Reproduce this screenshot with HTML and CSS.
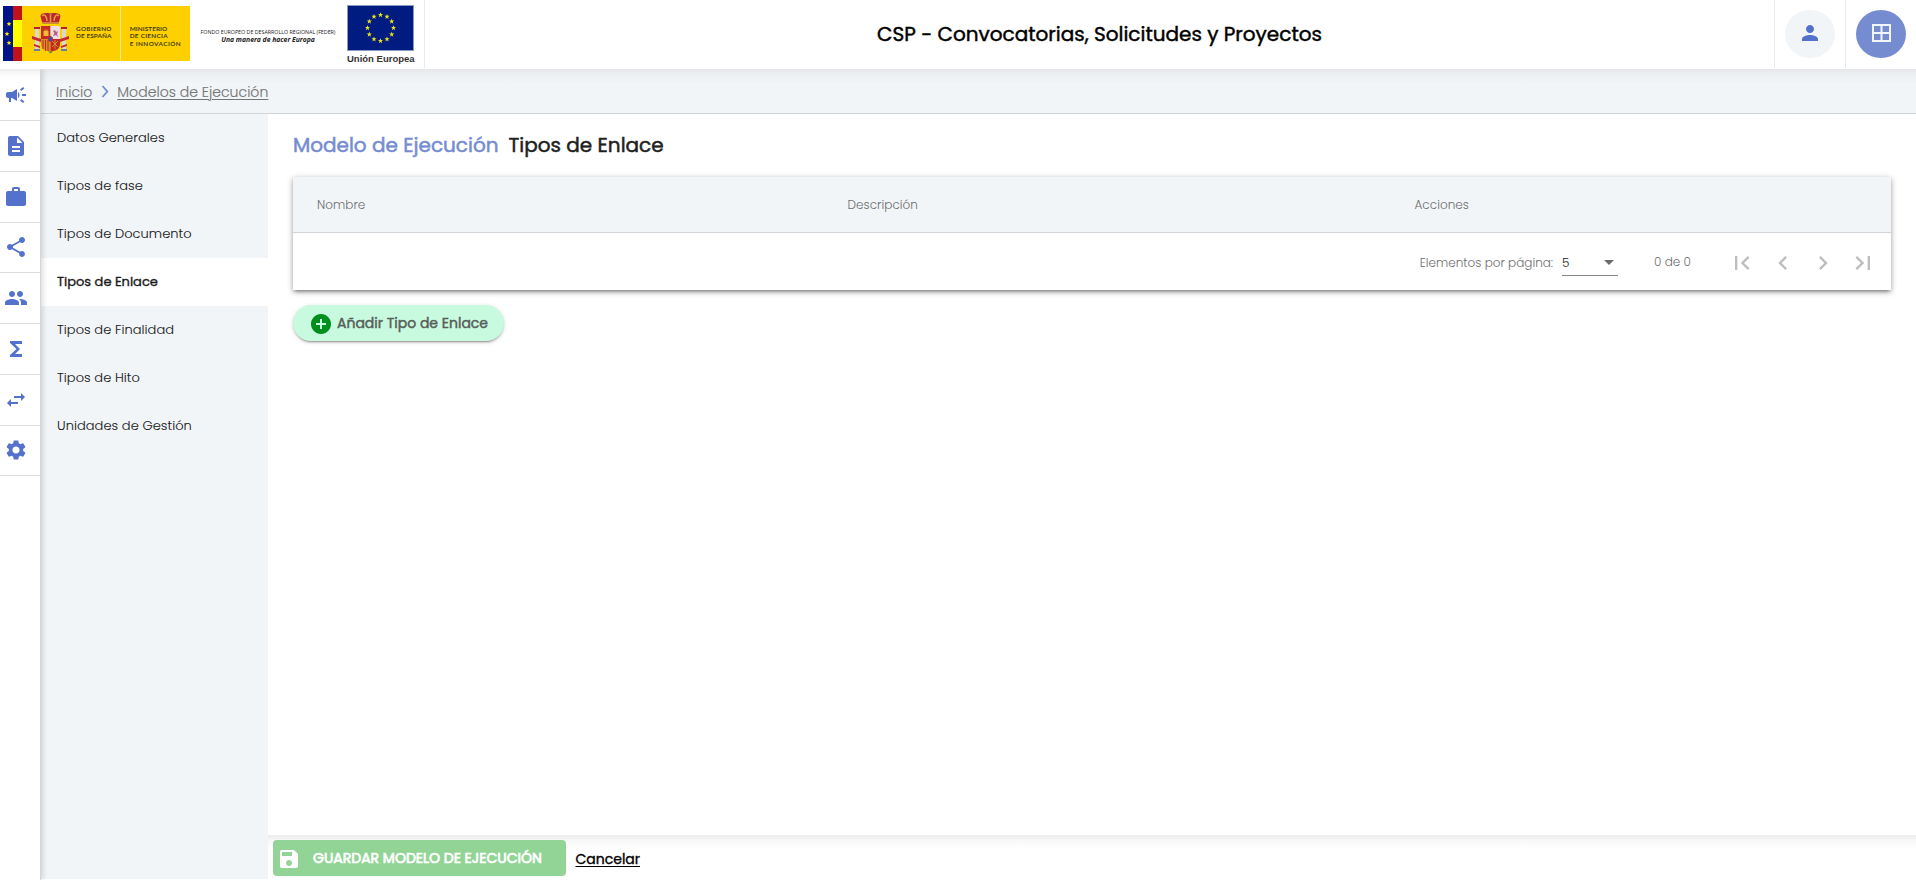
FILE: index.html
```
<!DOCTYPE html>
<html lang="es">
<head>
<meta charset="utf-8">
<title>CSP - Convocatorias, Solicitudes y Proyectos</title>
<link rel="stylesheet" href="styles.css">
</head>
<body>
<div class="app">
  <header class="topbar">
    <div class="logos">
      <svg class="logo-gob" width="187" height="55" viewBox="0 0 187 55">
        <rect width="187" height="55" fill="#ffd000"/>
        <rect width="10" height="55" fill="#001489"/>
        <rect x="10" width="9" height="55" fill="#c1121c"/>
        <rect x="10" y="14" width="9" height="27" fill="#ffff00"/>
        <g fill="#ffe600">
          <path id="st" d="M6 15.500l.7 1.500 1.600.2-1.200 1.100.3 1.600-1.400-.8-1.400.8.3-1.600L3.700 17.200l1.600-.2z"/>
          <use href="#st" x="-2" y="10"/>
          <use href="#st" y="19"/>
        </g>
        <g>
          <path d="M38 12c-2-5 3-5 9.500-5s11.500 0 9.500 5l-1.500 6h-16z" fill="#bf2530"/>
          <path d="M39 10c3-3 5 2 5 5M56 10c-3-3-5 2-5 5M47.500 7v9M39 17h17" fill="none" stroke="#d9a63a" stroke-width="1.500"/>
          <circle cx="47.500" cy="8" r="1.300" fill="#a98028"/>
          <rect x="32" y="23" width="4" height="21" fill="#d9d9cf"/>
          <rect x="59" y="23" width="4" height="21" fill="#d9d9cf"/>
          <path d="M31 21h6v2h-6zM58 21h6v2h-6z" fill="#b3222c"/>
          <path d="M31 43h6v2h-6zM58 43h6v2h-6z" fill="#68809b"/>
          <path d="M29 30l9 3v3l-9-3zM66 30l-9 3v3l9-3zM31 38l6 2v2l-6-2zM64 38l-6 2v2l6-2z" fill="#c62834"/>
          <path d="M38 20h9.500v13H38z" fill="#c52a2b"/>
          <path d="M47.500 20H57v13h-9.500z" fill="#eddce4"/>
          <path d="M38 33h9.500v12.500C42 45 38 43 38 38z" fill="#df8b24"/>
          <path d="M47.500 33H57v5c0 5-4 7-9.500 7.500z" fill="#bf2b24"/>
          <path d="M40.500 30v-5h1v-1.500h1V25h1v-1.500h1V25h1v5z" fill="#edbd35"/>
          <path d="M50 30l1.500-3-1.500-2 2-1 1 2 2-1-1 3 1 3-2-2z" fill="#b8587e"/>
          <path d="M40 34v9M42.500 34v11M45 34v11" stroke="#b6302a"/>
          <path d="M49 35l6 6m0-6l-6 6M52 34v9" stroke="#dda73a" stroke-width=".7"/>
          <ellipse cx="47.500" cy="33" rx="2.200" ry="2.600" fill="#34549c" stroke="#c62834" stroke-width=".8"/>
          <path d="M45 45.500h5l-2.500 2z" fill="#5f8c4a"/>
        </g>
        <rect x="117" width="1" height="55" fill="#ffe98a"/>
        <g class="gob-text">
          <text x="73" y="25.300" textLength="35.500">GOBIERNO</text>
          <text x="73" y="32.300" textLength="35.500">DE ESPAÑA</text>
          <text x="126.700" y="25.300" textLength="37.500">MINISTERIO</text>
          <text x="126.700" y="32.300" textLength="38">DE CIENCIA</text>
          <text x="126.700" y="39.500" textLength="51">E INNOVACIÓN</text>
        </g>
      </svg>
      <div class="feder">
        <span class="feder-fund">FONDO EUROPEO DE DESARROLLO REGIONAL (FEDER)</span>
        <span class="feder-motto">Una manera de hacer Europa</span>
      </div>
      <div class="eu">
        <svg width="67" height="46" viewBox="0 0 67 46">
          <rect x=".5" y=".5" width="66" height="45" fill="#001c80" stroke="#8c98c8"/>
          <g fill="#e8e21a">
            <path id="eu" d="M33.500 7.300l.7 1.800h1.800l-1.400 1.200.5 1.900-1.600-1.100-1.600 1.100.5-1.900-1.400-1.200h1.800z"/>
            <use href="#eu" x="6.500" y="1.700"/><use href="#eu" x="11.200" y="6.500"/>
            <use href="#eu" x="13" y="13"/><use href="#eu" x="11.200" y="19.500"/>
            <use href="#eu" x="6.500" y="24.200"/><use href="#eu" y="26"/>
            <use href="#eu" x="-6.500" y="24.200"/><use href="#eu" x="-11.200" y="19.500"/>
            <use href="#eu" x="-13" y="13"/><use href="#eu" x="-11.200" y="6.500"/>
            <use href="#eu" x="-6.500" y="1.700"/>
          </g>
        </svg>
        <span class="eu-name">Unión Europea</span>
      </div>
    </div>
    <h1 class="app-title">CSP - Convocatorias, Solicitudes y Proyectos</h1>
    <div class="top-action">
      <span class="round"><svg width="24" height="24" viewBox="0 0 24 24"><path d="M12 12c2.210 0 4-1.790 4-4s-1.790-4-4-4-4 1.790-4 4 1.790 4 4 4zm0 2c-2.670 0-8 1.340-8 4v2h16v-2c0-2.660-5.330-4-8-4z"/></svg></span>
    </div>
    <div class="top-action">
      <span class="round round-solid"><svg width="25" height="24" viewBox="0 0 25 24"><path fill-rule="evenodd" d="M3 3h19v18H3zM5 5v6h6.500V5zM13.500 5v6H20V5zM5 13v6h6.500v-6zM13.500 13v6H20v-6z"/></svg></span>
    </div>
  </header>

  <div class="body">
    <nav class="rail">
      <a class="rail-item"><svg viewBox="0 0 24 24"><path d="M18 11v2h4v-2h-4zM16 17.610c.96.710 2.210 1.650 3.200 2.390.4-.53.800-1.070 1.200-1.600-.99-.74-2.240-1.680-3.200-2.400-.4.540-.8 1.080-1.200 1.610zM20.400 5.600c-.4-.53-.8-1.070-1.200-1.600-.99.740-2.240 1.680-3.200 2.400.4.530.8 1.070 1.200 1.600.96-.72 2.210-1.650 3.200-2.400zM4 9c-1.100 0-2 .9-2 2v2c0 1.100.9 2 2 2h1v4h2v-4h1l5 3V6L8 9H4zM15.500 12c0-1.330-.58-2.530-1.500-3.350v6.690c.92-.81 1.500-2.010 1.500-3.340z"/></svg></a>
      <a class="rail-item"><svg viewBox="0 0 24 24"><path d="M14 2H6c-1.100 0-1.990.9-1.990 2L4 20c0 1.100.890 2 1.990 2H18c1.100 0 2-.9 2-2V8l-6-6zm2 16H8v-2h8v2zm0-4H8v-2h8v2zm-3-5V3.500L18.500 9H13z"/></svg></a>
      <a class="rail-item"><svg viewBox="0 0 24 24"><path d="M20 6h-4V4c0-1.110-.89-2-2-2h-4c-1.110 0-2 .89-2 2v2H4c-1.110 0-1.990.89-1.990 2L2 19c0 1.110.89 2 2 2h16c1.110 0 2-.89 2-2V8c0-1.110-.89-2-2-2zm-6 0h-4V4h4v2z"/></svg></a>
      <a class="rail-item"><svg viewBox="0 0 24 24"><path d="M18 16.080c-.76 0-1.440.3-1.960.77L8.910 12.700c.05-.23.090-.46.090-.7s-.04-.47-.09-.7l7.050-4.110c.54.500 1.250.810 2.040.810 1.660 0 3-1.340 3-3s-1.340-3-3-3-3 1.340-3 3c0 .24.040.47.090.7L8.040 9.810C7.500 9.310 6.790 9 6 9c-1.660 0-3 1.340-3 3s1.340 3 3 3c.79 0 1.500-.31 2.040-.81l7.120 4.160c-.05.21-.08.43-.08.65 0 1.610 1.310 2.920 2.920 2.920s2.920-1.310 2.920-2.920-1.310-2.920-2.920-2.920z"/></svg></a>
      <a class="rail-item"><svg viewBox="0 0 24 24"><path d="M16 11c1.660 0 2.990-1.340 2.990-3S17.660 5 16 5s-3 1.340-3 3 1.340 3 3 3zm-8 0c1.660 0 2.990-1.340 2.990-3S9.660 5 8 5 5 6.340 5 8s1.340 3 3 3zm0 2c-2.330 0-7 1.170-7 3.500V19h14v-2.500c0-2.330-4.670-3.500-7-3.500zm8 0c-.29 0-.62.020-.97.050 1.160.84 1.970 1.970 1.970 3.450V19h6v-2.500c0-2.330-4.670-3.500-7-3.500z"/></svg></a>
      <a class="rail-item"><svg viewBox="0 0 24 24"><path d="M18 4H6v2l6.500 6L6 18v2h12v-3h-7l5-5-5-5h7z"/></svg></a>
      <a class="rail-item"><svg viewBox="0 0 24 24"><path d="M6.990 11L3 15l3.990 4v-3H14v-2H6.990v-3zM21 9l-3.990-4v3H10v2h7.010v3L21 9z"/></svg></a>
      <a class="rail-item"><svg viewBox="0 0 24 24"><path d="M19.140 12.940c.04-.3.060-.61.060-.94 0-.32-.02-.64-.07-.94l2.030-1.580c.18-.14.230-.41.120-.61l-1.920-3.320c-.12-.22-.37-.29-.59-.22l-2.390.96c-.5-.38-1.030-.7-1.620-.94l-.36-2.540c-.04-.24-.24-.41-.48-.41h-3.840c-.24 0-.43.170-.47.410l-.36 2.540c-.59.240-1.130.570-1.620.940l-2.390-.96c-.22-.08-.47 0-.59.220L2.740 8.870c-.12.210-.08.470.12.610l2.030 1.580c-.05.300-.09.630-.09.940s.02.640.070.940l-2.030 1.580c-.18.140-.23.410-.12.610l1.920 3.320c.12.220.370.290.59.220l2.390-.96c.5.380 1.030.700 1.620.940l.36 2.540c.05.240.24.410.48.410h3.840c.24 0 .44-.17.470-.41l.36-2.540c.59-.24 1.130-.56 1.620-.94l2.390.96c.22.080.470 0 .59-.22l1.920-3.320c.12-.22.070-.47-.12-.61l-2.010-1.580zM12 15.600c-1.980 0-3.600-1.620-3.600-3.600s1.620-3.600 3.600-3.600 3.600 1.620 3.600 3.600-1.620 3.600-3.600 3.600z"/></svg></a>
    </nav>

    <div class="page">
      <div class="breadcrumb">
        <a>Inicio</a>
        <svg width="8" height="13" viewBox="0 0 8 13"><path d="M1.500 1l4.800 5.500L1.500 12"/></svg>
        <a>Modelos de Ejecución</a>
      </div>
      <div class="columns">
        <aside class="side-menu">
          <a>Datos Generales</a>
          <a>Tipos de fase</a>
          <a>Tipos de Documento</a>
          <a class="active">Tipos de Enlace</a>
          <a>Tipos de Finalidad</a>
          <a>Tipos de Hito</a>
          <a>Unidades de Gestión</a>
        </aside>
        <div class="main">
          <main class="content">
            <h2 class="heading"><span class="heading-model">Modelo de Ejecución</span><span>Tipos de Enlace</span></h2>
            <section class="card">
              <div class="table-head">
                <span>Nombre</span><span>Descripción</span><span>Acciones</span>
              </div>
              <div class="paginator">
                <span class="page-label">Elementos por página:</span>
                <span class="page-size"><span class="page-value">5</span><i class="caret"></i></span>
                <span class="page-range">0 de 0</span>
                <span class="pager">
                  <svg viewBox="0 0 24 24"><path d="M18.410 16.590L13.820 12l4.590-4.590L17 6l-6 6 6 6zM6 6h2v12H6z"/></svg>
                  <svg viewBox="0 0 24 24"><path d="M15.410 7.410L14 6l-6 6 6 6 1.410-1.410L10.830 12z"/></svg>
                  <svg viewBox="0 0 24 24"><path d="M10 6L8.590 7.410 13.170 12l-4.580 4.590L10 18l6-6z"/></svg>
                  <svg viewBox="0 0 24 24"><path d="M5.590 7.410L10.180 12l-4.590 4.590L7 18l6-6-6-6zM16 6h2v12h-2z"/></svg>
                </span>
              </div>
            </section>
            <button class="add"><svg width="24" height="24" viewBox="0 0 24 24"><path d="M12 2C6.480 2 2 6.480 2 12s4.480 10 10 10 10-4.480 10-10S17.520 2 12 2zm5 11h-4v4h-2v-4H7v-2h4V7h2v4h4v2z"/></svg>Añadir Tipo de Enlace</button>
          </main>
          <footer class="footer">
            <button class="save"><svg width="24" height="24" viewBox="0 0 24 24"><path d="M17 3H5c-1.110 0-2 .9-2 2v14c0 1.100.890 2 2 2h14c1.100 0 2-.9 2-2V7l-4-4zm-5 16c-1.660 0-3-1.340-3-3s1.340-3 3-3 3 1.340 3 3-1.340 3-3 3zm3-10H5V5h10v4z"/></svg>GUARDAR MODELO DE EJECUCIÓN</button>
            <a class="cancel">Cancelar</a>
          </footer>
        </div>
      </div>
    </div>
  </div>
</div>
</body>
</html>
```
FILE: styles.css
```
* { box-sizing: border-box; }

body {
  margin: 0;
  background: #fff;
  color: #1f1f1f;
  font-family: Poppins, Inter, "Open Sans", sans-serif;
}

svg { display: block; flex: none; }

.app { height: 880px; display: flex; flex-direction: column; overflow: hidden; }

/* Top bar */
.topbar { height: 69px; flex: none; display: flex; align-items: flex-start; }
.logos { width: 425px; height: 68px; display: flex; border-right: 1px solid #e8e9f1; }
.logo-gob { margin: 6px 0 0 3px; }
.gob-text { font: 700 6.400px Lato, sans-serif; fill: #463c10; }
.feder { width: 136px; margin: 28px 0 0 10px; display: flex; flex-direction: column; align-items: center; white-space: nowrap; color: #222; }
.feder-fund { font: 400 5.300px/8px "Open Sans", sans-serif; }
.feder-motto { font: italic 700 6.800px/8px "Open Sans", sans-serif; }
.eu { margin: 5px 0 0 11px; display: flex; flex-direction: column; align-items: center; }
.eu-name { margin-top: 1px; font: 700 9.500px/14px "Liberation Sans", sans-serif; color: #333; white-space: nowrap; }
.app-title { flex: 1; margin: 0; text-align: center; font-size: 20px; line-height: 68px; font-weight: 400; -webkit-text-stroke: .45px; color: #000; }
.top-action { width: 71px; height: 68px; padding: 10px 0 0 10px; border-left: 1px solid #e8e9f1; }
.round { width: 50px; height: 48px; border-radius: 50%; background: #f1f5f8; display: flex; align-items: center; justify-content: center; }
.round svg { fill: #5472cc; margin-top: -3px; }
.round-solid { background: #758cd1; }
.round-solid svg { fill: #f1f5f8; }

/* Layout under the top bar */
.body { flex: 1; min-height: 0; display: flex; box-shadow: inset 0 12px 12px -12px rgba(0, 0, 0, .14); }
.rail { width: 41px; padding-top: 1.250px; flex: none; border-right: 1px solid #d3d6da; z-index: 1; box-shadow: 2px 0 5px rgba(0, 0, 0, .14); clip-path: inset(0 -8px 0 0); }
.rail-item { height: 50.750px; padding: 0 0 0 4px; display: flex; align-items: center; border-bottom: 1px solid #dcdcdc; }
.rail-item svg { width: 24px; height: 24px; fill: #5472cc; }
.page { flex: 1; display: flex; flex-direction: column; }

.breadcrumb { height: 45px; padding: 2px 0 0 15px; display: flex; align-items: center; border-bottom: 1px solid #d0d5da; background: linear-gradient(#e6e7e9, #eef1f4 8px, #f1f5f8 15px); font-size: 14px; font-weight: 300; letter-spacing: .04px; -webkit-text-stroke: .15px; color: #757575; }
.breadcrumb a { text-decoration: underline; text-underline-offset: 2px; text-decoration-thickness: 1px; }
.breadcrumb svg { margin: -2px 8px 0 9px; fill: none; stroke: #758cd1; stroke-width: 1.800; }

.columns { flex: 1; min-height: 0; display: flex; }
.side-menu { width: 227px; margin-bottom: 1px; background: #f1f5f8; display: flex; flex-direction: column; }
.side-menu a { height: 48px; padding: 0 16px; line-height: 47px; font-size: 13px; font-weight: 300; letter-spacing: .05px; -webkit-text-stroke: .1px; color: #1a1a1a; }
.side-menu .active { background: #fff; font-weight: 400; letter-spacing: 0; -webkit-text-stroke: .35px; }

/* Main column */
.main { flex: 1; display: flex; flex-direction: column; }
.content { flex: 1; padding: 17px 25px 0; }
.heading { margin: 0; display: flex; gap: 10px; font-size: 20px; line-height: 28px; font-weight: 400; -webkit-text-stroke: .5px; }
.heading-model { color: #758cd1; }

.card { height: 113px; margin-top: 18px; background: #fff; box-shadow: 0 3px 3px -2px rgba(0, 0, 0, .3), 0 2px 5px rgba(0, 0, 0, .3), 0 1px 8px rgba(0, 0, 0, .1); }
.table-head { height: 56px; padding-left: 24px; display: grid; grid-template-columns: 530.500px 567px 1fr; align-items: center; background: #f1f5f8; border-bottom: 1px solid #d0d4d8; font-size: 12px; font-weight: 300; letter-spacing: .04px; color: #6e6e6e; }
.paginator { height: 57px; padding-right: 14px; display: flex; align-items: center; justify-content: flex-end; font-size: 12px; font-weight: 300; color: #6e6e6e; }
.page-label { margin-top: 2px; margin-right: 9px; }
.page-size { width: 56px; height: 28px; margin-top: 1px; padding-right: 4px; display: flex; align-items: center; justify-content: space-between; border-bottom: 1px solid #858585; color: #222; }
.page-value { margin-top: 2px; }
.caret { margin-top: 1px; border: 5px solid transparent; border-top-color: #6b6b6b; border-bottom: 0; }
.page-range { margin-left: 36px; width: 74.400px; }
.pager { display: flex; gap: 12.200px; margin-top: 2px; }
.pager svg { width: 28px; height: 28px; fill: #bdbdbd; }

.add { width: 211px; height: 36px; margin-top: 15px; padding: 0 0 0 16px; display: flex; align-items: center; gap: 4px; border: 0; border-radius: 18px; background: #c8fae0; box-shadow: 0 3px 1px -2px rgba(0, 0, 0, .2), 0 2px 2px rgba(0, 0, 0, .14), 0 1px 5px rgba(0, 0, 0, .12); font: 400 14px/36px Poppins, Inter, sans-serif; -webkit-text-stroke: .45px; color: #575d59; white-space: nowrap; }
.add svg { fill: #008f1d; margin-top: 2px; }

.footer { height: 45px; padding: 5px 0 0 5px; display: flex; background: linear-gradient(#ececec, #f8f8f8 6px, #fff 14px); }
.save { width: 293px; height: 36px; padding: 0 0 0 4px; display: flex; align-items: center; gap: 12px; border: 0; border-radius: 4px; background: #92d496; font: 400 14px/36px Poppins, Inter, sans-serif; -webkit-text-stroke: .7px; color: #fff; white-space: nowrap; }
.save svg { fill: #fff; margin-top: 2px; }
.cancel { margin-left: 9.500px; line-height: 38px; font-size: 14px; font-weight: 400; -webkit-text-stroke: .35px; color: #000; text-decoration: underline; text-underline-offset: 2px; }
```
